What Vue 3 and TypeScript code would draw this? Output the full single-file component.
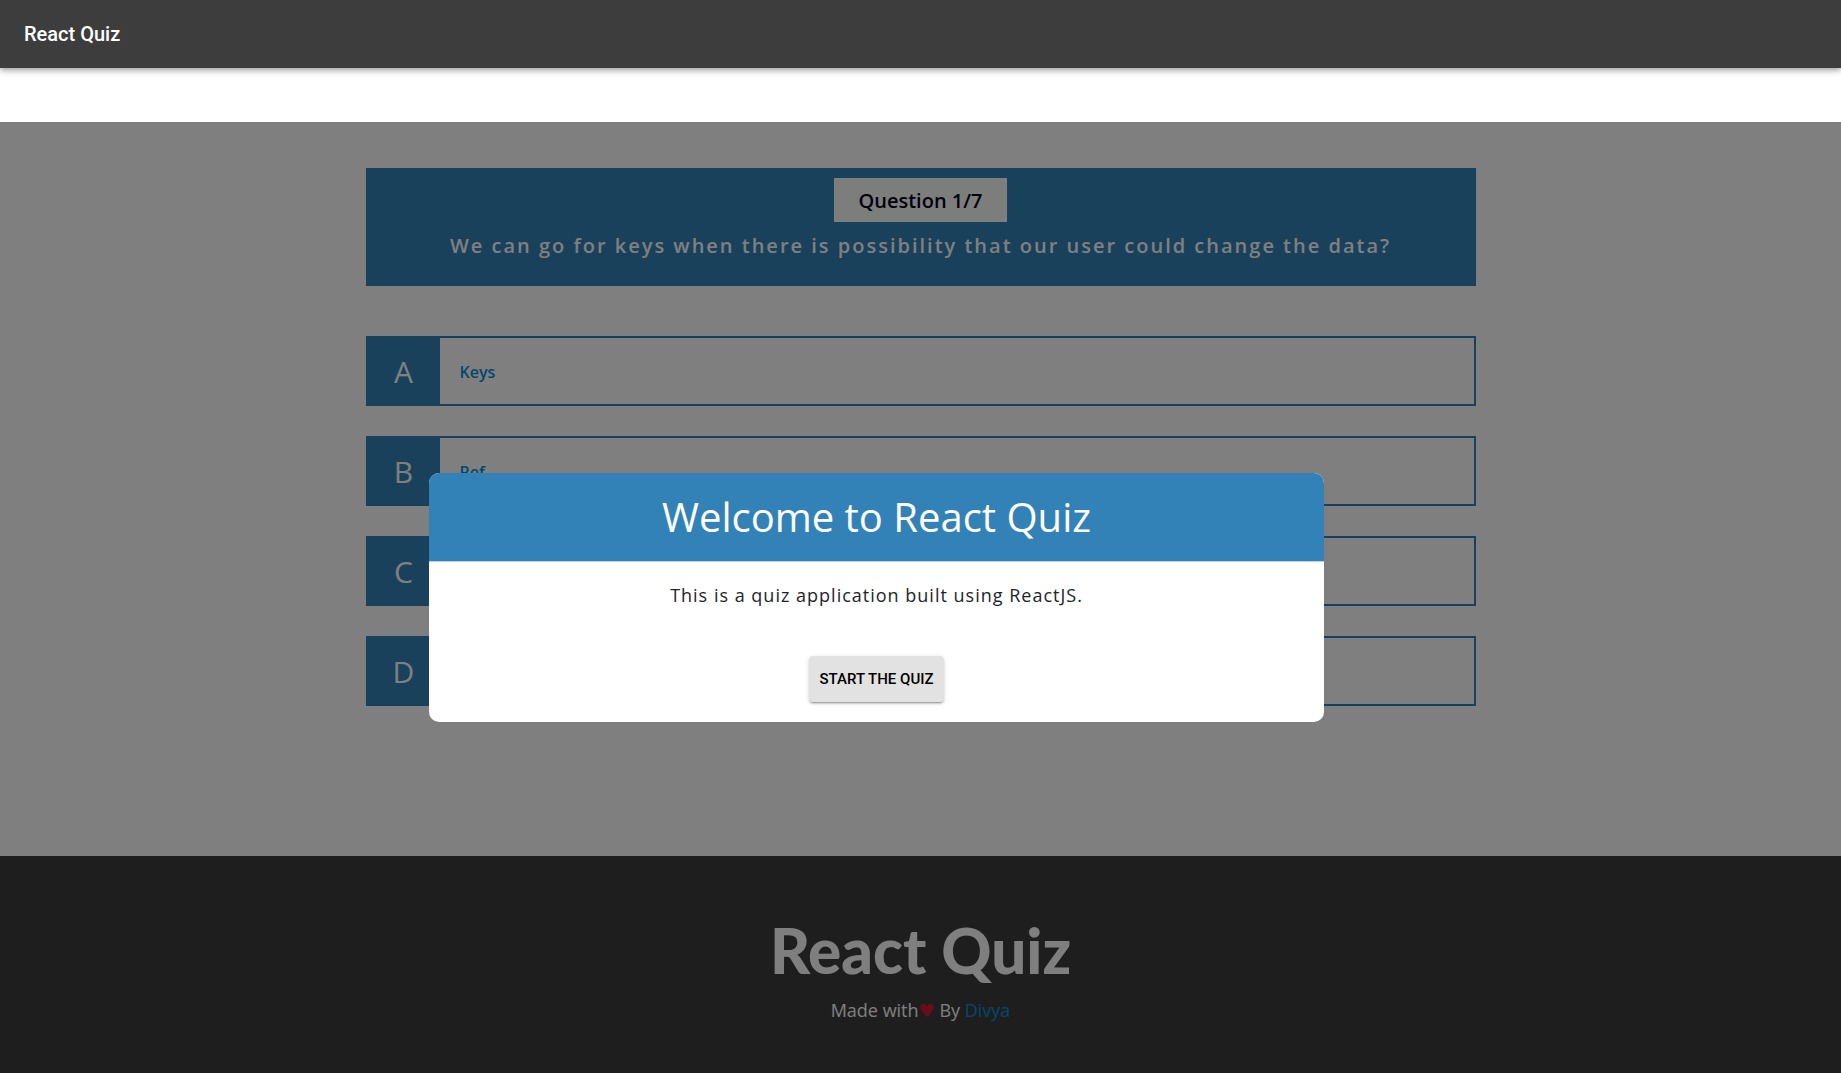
<script setup lang="ts">
import { ref } from 'vue'

interface Option {
  letter: string
  label: string
}

const current = ref<number>(1)
const total = 7
const welcomeOpen = ref<boolean>(true)
const question = 'We can go for keys when there is possibility that our user could change the data?'

const options: Option[] = [
  { letter: 'A', label: 'Keys' },
  { letter: 'B', label: 'Ref' },
  { letter: 'C', label: '' },
  { letter: 'D', label: '' },
]
</script>

<template>
  <div class="page">
    <header class="topbar">
      <span class="topbar-title">React Quiz</span>
    </header>

    <div class="stage">
      <main class="quiz">
        <section class="question">
          <span class="counter">Question {{ current }}/{{ total }}</span>
          <h2 class="question-text">{{ question }}</h2>
        </section>
        <ul class="options">
          <li v-for="option in options" :key="option.letter">
            <button type="button" class="option">
              <span class="letter">{{ option.letter }}</span>
              <span class="label">{{ option.label }}</span>
            </button>
          </li>
        </ul>
      </main>

      <footer class="footer">
        <h3 class="brand">React Quiz</h3>
        <p class="credit">Made with<span class="heart">♥</span> By <a href="#">Divya</a></p>
      </footer>

      <div v-if="welcomeOpen" class="backdrop">
        <div class="modal" role="dialog" aria-labelledby="welcome-title">
          <h1 id="welcome-title" class="modal-title">Welcome to React Quiz</h1>
          <div class="modal-body">
            <p class="modal-text">This is a quiz application built using ReactJS.</p>
            <button type="button" class="start" @click="welcomeOpen = false">Start the quiz</button>
          </div>
        </div>
      </div>
    </div>
  </div>
</template>

<style>
body {
  margin: 0;
  background: #fff;
}
</style>

<style scoped>
.page {
  display: flex;
  flex-direction: column;
  min-height: 100vh;
  font-family: 'Open Sans', sans-serif;
}

.page * {
  box-sizing: border-box;
}

.topbar {
  display: flex;
  align-items: center;
  height: 68px;
  margin-bottom: 54px;
  padding: 0 24px;
  background: #3d3d3d;
  color: #fff;
  box-shadow:
    0 2px 4px -1px rgba(0, 0, 0, 0.2),
    0 4px 5px 0 rgba(0, 0, 0, 0.14),
    0 1px 10px 0 rgba(0, 0, 0, 0.12);
}

.topbar-title {
  font: 500 20px/32px Roboto, sans-serif;
}

.stage {
  position: relative;
  display: flex;
  flex: 1;
  flex-direction: column;
}

.quiz {
  width: 100%;
  max-width: 1140px;
  margin: 0 auto;
  padding: 46px 15px 150px;
}

.question {
  display: flex;
  flex-direction: column;
  align-items: center;
  padding: 10px 10px 24px;
  background: #3282b8;
  text-align: center;
}

.counter {
  padding: 8px 25px 6px;
  background: #f8fcf8;
  color: #00001c;
  font-size: 20px;
  font-weight: 600;
  line-height: 30px;
}

.question-text {
  margin: 8px 0 0;
  color: #fff;
  font-size: 20px;
  font-weight: 600;
  line-height: 32px;
  letter-spacing: 2px;
}

.options {
  display: flex;
  flex-direction: column;
  gap: 30px;
  margin: 50px 0 0;
  padding: 0;
  list-style: none;
}

.option {
  display: flex;
  align-items: stretch;
  width: 100%;
  height: 70px;
  padding: 0;
  border: 2px solid #3282b8;
  background: #fff;
  font-family: inherit;
  text-align: left;
  cursor: pointer;
}

.letter {
  display: flex;
  align-items: center;
  justify-content: center;
  width: 72px;
  background: #3282b8;
  color: #fff;
  font-size: 30px;
}

.label {
  display: flex;
  align-items: center;
  padding: 2px 20px 0;
  color: #0291d8;
  font-size: 16px;
  font-weight: 600;
}

.footer {
  flex: 1;
  padding: 58px 15px 40px;
  background: #3d3d3d;
  color: #fff;
  text-align: center;
}

.brand {
  margin: 0;
  font-family: Lato, sans-serif;
  font-size: 62px;
  font-weight: 900;
  line-height: 72px;
}

.credit {
  margin: 10px 0 0;
  font-size: 18px;
  line-height: 28px;
}

.heart {
  color: #dc143c;
  font-family: 'DejaVu Sans', sans-serif;
}

.credit a {
  color: #0291d8;
  text-decoration: none;
}

.backdrop {
  position: absolute;
  inset: 0;
  display: flex;
  align-items: center;
  justify-content: center;
  padding-right: 88px;
  background: rgba(0, 0, 0, 0.5);
}

.modal {
  width: 100%;
  max-width: 895px;
  overflow: hidden;
  border-radius: 10px;
  background: #fff;
  color: #212529;
  text-align: center;
}

.modal-title {
  margin: 0;
  padding: 14px;
  border-bottom: 1px solid #bfd2e0;
  background: #3282b8;
  background-clip: padding-box;
  color: #fff;
  font-size: 40px;
  font-weight: 400;
  line-height: 60px;
}

.modal-body {
  padding: 20px;
}

.modal-text {
  margin: 0 0 48px;
  font-size: 18px;
  line-height: 26px;
  letter-spacing: 1px;
}

.start {
  height: 46px;
  padding: 0 10px;
  border: 0;
  border-radius: 4px;
  background: #e2e2e2;
  color: #000;
  font: 500 15px/24px Roboto, sans-serif;
  text-transform: uppercase;
  box-shadow:
    0 3px 1px -2px rgba(0, 0, 0, 0.2),
    0 2px 2px 0 rgba(0, 0, 0, 0.14),
    0 1px 5px 0 rgba(0, 0, 0, 0.12);
  cursor: pointer;
}
</style>
